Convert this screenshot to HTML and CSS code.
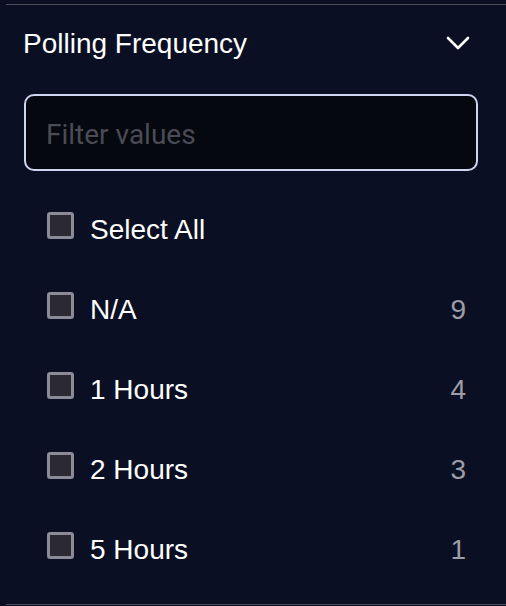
FILE: index.html
```html
<!DOCTYPE html>
<html>
<head>
<meta charset="utf-8">
<link rel="stylesheet" href="styles.css">
</head>
<body>
<div class="panel">
  <div class="header">
    <span class="title">Polling Frequency</span>
    <svg class="chevron" width="24" height="14" viewBox="0 0 24 14"><path d="M2 2 L12 12 L22 2" fill="none" stroke="#ffffff" stroke-width="2.6" stroke-linecap="round" stroke-linejoin="round"/></svg>
  </div>
  <div class="search">
    <input class="filter" type="text" placeholder="Filter values">
  </div>
  <ul class="options">
    <li class="option"><span class="box"></span><span class="label">Select All</span></li>
    <li class="option"><span class="box"></span><span class="label">N/A</span><span class="count">9</span></li>
    <li class="option"><span class="box"></span><span class="label">1 Hours</span><span class="count">4</span></li>
    <li class="option"><span class="box"></span><span class="label">2 Hours</span><span class="count">3</span></li>
    <li class="option"><span class="box"></span><span class="label">5 Hours</span><span class="count">1</span></li>
  </ul>
</div>
</body>
</html>
```
FILE: styles.css
```css
html, body {
  margin: 0;
  padding: 0;
  background: #0a0f23;
  height: 100%;
  overflow: hidden;
}
body {
  font-family: "Liberation Sans", Arial, sans-serif;
  color: #ffffff;
}
.panel {
  margin: 4px 0 0 6px;
  border-top: 1px solid #4a4c55;
  border-bottom: 1px solid #4a4c55;
  height: 601px;
  box-sizing: border-box;
  display: flex;
  flex-direction: column;
}
.header {
  height: 80px;
  display: flex;
  align-items: center;
  justify-content: space-between;
  padding: 0 36px 0 17px;
}
.title {
  font-size: 28px;
  line-height: 34px;
  margin-top: -2px;
}
.chevron {
  display: block;
  margin-top: -4px;
}
.search {
  padding: 9px 28px 0 18px;
}
.filter {
  display: block;
  width: 100%;
  box-sizing: border-box;
  height: 77px;
  background: #05080f;
  border: 2px solid #cdd5f2;
  border-radius: 10px;
  padding: 4px 20px 0 20px;
  font-family: Roboto, sans-serif;
  font-size: 28px;
  color: #ffffff;
  outline: none;
}
.filter::placeholder {
  color: #4b4b55;
}
.options {
  list-style: none;
  margin: 19px 0 0 0;
  padding: 0 40px 0 41px;
}
.option {
  height: 80px;
  display: flex;
  align-items: center;
}
.box {
  width: 27px;
  height: 27px;
  box-sizing: border-box;
  border: 3px solid #8b8b97;
  border-radius: 3px;
  background: #2b2a33;
  margin-bottom: 9px;
  flex: none;
}
.label {
  font-size: 28px;
  margin-left: 16px;
  flex: 1;
}
.count {
  font-size: 28px;
  color: #9d9da5;
}
```
